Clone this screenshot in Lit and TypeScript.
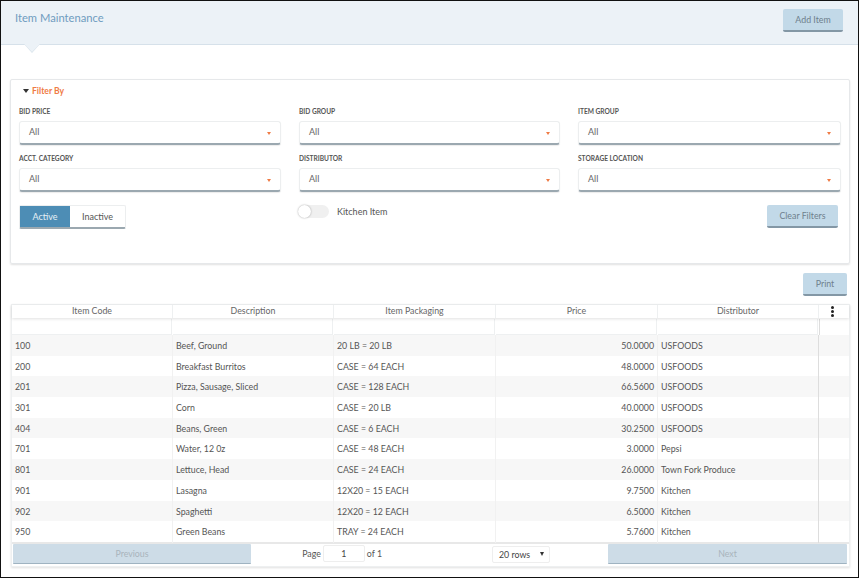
import { LitElement, html, css } from "lit";
import { customElement } from "lit/decorators.js";

const rows = [
  ["100", "Beef, Ground", "20 LB = 20 LB", "50.0000", "USFOODS"],
  ["200", "Breakfast Burritos", "CASE = 64 EACH", "48.0000", "USFOODS"],
  ["201", "Pizza, Sausage, Sliced", "CASE = 128 EACH", "66.5600", "USFOODS"],
  ["301", "Corn", "CASE = 20 LB", "40.0000", "USFOODS"],
  ["404", "Beans, Green", "CASE = 6 EACH", "30.2500", "USFOODS"],
  ["701", "Water, 12 0z", "CASE = 48 EACH", "3.0000", "Pepsi"],
  ["801", "Lettuce, Head", "CASE = 24 EACH", "26.0000", "Town Fork Produce"],
  ["901", "Lasagna", "12X20 = 15 EACH", "9.7500", "Kitchen"],
  ["902", "Spaghetti", "12X20 = 12 EACH", "6.5000", "Kitchen"],
  ["950", "Green Beans", "TRAY = 24 EACH", "5.7600", "Kitchen"],
];
const filters = ["BID PRICE", "BID GROUP", "ITEM GROUP", "ACCT. CATEGORY", "DISTRIBUTOR", "STORAGE LOCATION"];
const heads = ["Item Code", "Description", "Item Packaging", "Price", "Distributor"];

@customElement("app-root")
export class AppRoot extends LitElement {
  static styles = css`
    :host { display: block; width: 860px; height: 579px; font-family: Lato, "Open Sans", sans-serif; color: #555; background: #fff; }
    * { box-sizing: border-box; }
    .frame { width: 859px; height: 578px; border: 1px solid #111; background: #fff; display: flex; flex-direction: column; overflow: hidden; }
    .header { height: 44px; flex: none; background: #ecf2f7; border-bottom: 1px solid #d6e1ea; display: flex; justify-content: space-between; padding: 8px 15px 0 14px; position: relative; }
    .title { font-size: 11.2px; color: #6f9cc0; line-height: 18px; }
    .notch { position: absolute; left: 23px; top: 43px; width: 16px; height: 9px; background: #d6e1ea; clip-path: polygon(0 0, 100% 0, 50% 100%); }
    .notch::after { content: ""; position: absolute; inset: 0 0 1px 0; background: #ecf2f7; clip-path: polygon(0 0, 100% 0, 50% 100%); }
    .btn { border: 0; background: #c2d9e8; border-bottom: 2px solid #8397a5; border-radius: 2px; color: #6e7f8c; font: 400 8.8px Lato, sans-serif; display: flex; align-items: center; justify-content: center; padding: 0; }
    .add { width: 60px; height: 23px; }
    .card { margin: 34px 8px 0 9px; height: 185px; flex: none; border: 1px solid #e6e8ea; border-radius: 2px; box-shadow: 0 1px 2px rgba(0,0,0,.12); padding: 0 8px; }
    .fhead { height: 22px; display: flex; align-items: center; gap: 3px; padding-left: 4px; color: #ef7b45; font-size: 8.6px; font-weight: 700; }
    .fhead .tri { width: 0; height: 0; border: 3px solid transparent; border-top: 4px solid #333; border-bottom: 0; }
    .grid { display: grid; grid-template-columns: 262px 261px 263px; column-gap: 18px; margin-top: 4px; row-gap: 8px; }
    label { display: block; font-size: 6.6px; font-weight: 700; color: #555; line-height: 10px; height: 15px; }
    .sel { height: 24px; border: 1px solid #eceeef; border-bottom: 2px solid #9ba8b0; border-radius: 3px; box-shadow: 0 1px 1px rgba(0,0,0,.08); display: flex; align-items: center; justify-content: space-between; padding: 0 9px 2px; font-size: 9px; color: #666; }
    .caret { width: 0; height: 0; border: 2.5px solid transparent; border-top: 3px solid #ef7b45; border-bottom: 0; margin-top: 3px; }
    .ctrl { display: grid; grid-template-columns: 262px 261px 263px; column-gap: 18px; margin-top: 13px; }
    .seg { width: 107px; height: 24px; display: flex; border: 1px solid #eceeef; border-bottom: 2px solid #9ba8b0; border-radius: 2px; font-size: 9px; }
    .seg div { display: flex; align-items: center; justify-content: center; }
    .on { width: 50px; background: #4d8db5; color: #e6f0f6; }
    .off { flex: 1; color: #555; }
    .kit { display: flex; align-items: flex-start; gap: 8px; font-size: 9px; color: #555; line-height: 13px; }
    .sw { width: 31px; height: 13px; background: #f0f0f0; border-radius: 7px; position: relative; margin-left: -1px; }
    .sw::after { content: ""; position: absolute; left: 0; top: 0; width: 13px; height: 13px; border-radius: 50%; background: #fff; box-shadow: 0 0 2px rgba(0,0,0,.35); }
    .clearwrap { display: flex; justify-content: flex-end; padding-right: 3px; }
    .clear { width: 71px; height: 23px; }
    .printrow { display: flex; justify-content: flex-end; padding: 9px 11px 0 0; flex: none; }
    .print { width: 44px; height: 23px; }
    .table { margin: 8px 8px 0 10px; flex: none; border: 1px solid #eef0f1; box-shadow: 0 1px 2px rgba(0,0,0,.12); }
    .tr { display: grid; grid-template-columns: 161px 161px 162px 162px 161px 1fr; }
    .th { height: 13px; box-shadow: 0 1px 3px rgba(0,0,0,.12); position: relative; }
    .th div { text-align: center; font-size: 8.8px; line-height: 12px; color: #666; border-right: 1px solid #eef0f1; }
    .th .menu { border: 0; display: flex; flex-direction: column; align-items: center; justify-content: center; gap: 1px; padding-right: 4px; }
    .menu i { width: 3px; height: 3px; border-radius: 50%; background: #222; display: block; }
    .fr { height: 17px; padding-top: 1px; }
    .fr div { border: 1px solid #eef0f1; border-width: 0 1px 1px 0; margin-right: 1px; }
    .fr div:last-child { border-left: 1px solid #ddd; border-right: 0; border-bottom: 0; margin: 0; }
    .row { height: 20.7px; }
    .row:nth-child(odd) { background: #f7f7f7; }
    .row div { font-size: 8.8px; line-height: 20.7px; padding: 1px 3px 0; color: #555; white-space: nowrap; border-right: 1px solid #f1f1f1; }
    .row div:nth-child(5) { border-right: 1px solid #ddd; }
    .row div:last-child { border: 0; }
    .row .r { text-align: right; padding-right: 3px; }
    .foot { height: 24px; border-top: 2px solid #e8e8e8; display: grid; grid-template-columns: 238px 1fr 239px; padding: 0 2px 0 1px; }
    .dis { height: 20px; background: #cddce7; border-bottom: 1px solid #9fb3c1; border-radius: 1px; color: #a9b4bc; font-size: 8.8px; display: flex; align-items: center; justify-content: center; }
    .mid { display: grid; grid-template-columns: 131px 1fr; font-size: 8.8px; color: #555; }
    .page { display: flex; align-items: center; justify-content: flex-end; gap: 2px; height: 20px; }
    .inp { width: 42px; height: 17px; border: 1px solid #eee; border-radius: 2px; text-align: center; line-height: 15px; color: #444; }
    .rows { width: 58px; height: 17px; margin: 2px 0 0 110px; border: 1px solid #eee; border-radius: 2px; display: flex; align-items: center; justify-content: space-between; padding: 0 5px 0 6px; color: #444; }
    .rows .t { width: 0; height: 0; border: 2.5px solid transparent; border-top: 4px solid #333; border-bottom: 0; }
  `;

  render() {
    return html`<div class="frame">
      <div class="header">
        <div class="title">Item Maintenance</div>
        <button class="btn add">Add Item</button>
        <div class="notch"></div>
      </div>
      <div class="card">
        <div class="fhead"><span class="tri"></span>Filter By</div>
        <div class="grid">
          ${filters.map((f) => html`<div><label>${f}</label><div class="sel"><span>All</span><span class="caret"></span></div></div>`)}
        </div>
        <div class="ctrl">
          <div class="seg"><div class="on">Active</div><div class="off">Inactive</div></div>
          <div class="kit"><span class="sw"></span><span>Kitchen Item</span></div>
          <div class="clearwrap"><button class="btn clear">Clear Filters</button></div>
        </div>
      </div>
      <div class="printrow"><button class="btn print">Print</button></div>
      <div class="table">
        <div class="tr th">
          ${heads.map((h) => html`<div>${h}</div>`)}
          <div class="menu"><i></i><i></i><i></i></div>
        </div>
        <div class="tr fr"><div></div><div></div><div></div><div></div><div></div><div></div></div>
        <div>
          ${rows.map((r) => html`<div class="tr row">
            <div>${r[0]}</div><div>${r[1]}</div><div>${r[2]}</div><div class="r">${r[3]}</div><div>${r[4]}</div><div></div>
          </div>`)}
        </div>
        <div class="foot">
          <div class="dis">Previous</div>
          <div class="mid">
            <div class="page"><span>Page</span><div class="inp">1</div><span>of 1</span></div>
            <div class="rows"><span>20 rows</span><span class="t"></span></div>
          </div>
          <div class="dis">Next</div>
        </div>
      </div>
    </div>`;
  }
}
